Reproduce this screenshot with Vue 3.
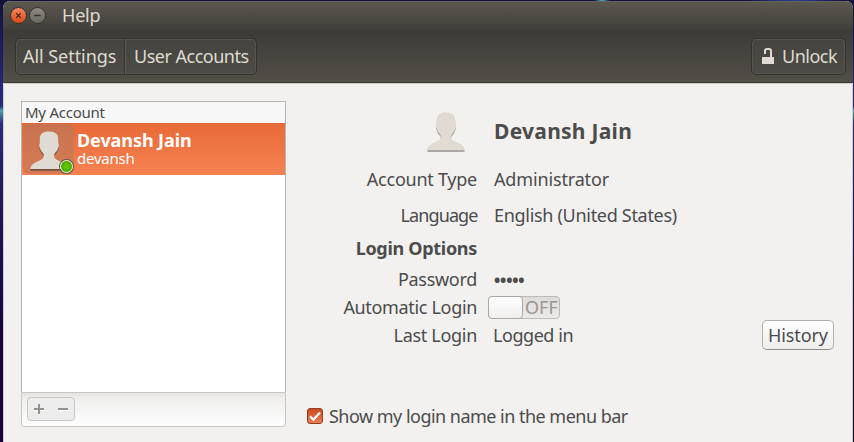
<script setup>
import { ref } from 'vue'

const automaticLogin = ref(false)
const showName = ref(true)
const silhouette =
  'M19.5 .5 C14 0 9.8 2.4 9.8 7.5 L9.6 12.5 C8.9 12.8 9 15.8 10 17.2 C10.7 19.8 12.2 20.9 13.2 22.2 C14.6 24.8 13.5 27.4 10.8 29 C6 31.2 0.6 33 0.3 38 L37.7 38 C37.4 33 32 31.2 27.2 29 C24.5 27.4 23.4 24.8 24.8 22.2 C25.8 20.9 27.3 19.8 28 17.2 C29 15.8 29.1 12.8 28.4 12.5 L28.2 7.5 C28.2 3.2 25.5 .7 19.5 .5 Z'
</script>

<template>
  <div class="desktop">
    <div class="window">
      <header class="titlebar">
        <button class="orb close" aria-label="Close">
          <svg viewBox="0 0 16 16"><path d="M5.5 5.5l5 5m0-5l-5 5" /></svg>
        </button>
        <button class="orb minimize" aria-label="Minimize">
          <svg viewBox="0 0 16 16"><path d="M4.5 8h7" /></svg>
        </button>
        <h1><span class="t-help">Help</span></h1>
      </header>

      <nav class="toolbar">
        <div class="group">
          <button class="seg all"><span class="t-all">All Settings</span></button>
          <button class="seg users"><span class="t-users">User Accounts</span></button>
        </div>
        <button class="unlock">
          <svg class="lock" viewBox="0 0 12 17">
            <path d="M0 9h12v7H0z" fill="#dfdbd2" />
            <path d="M3 6V3Q3 1 5 1H7Q9 1 9 3V9" fill="none" stroke="#dfdbd2" stroke-width="2" />
          </svg>
          <span class="t-unlock">Unlock</span>
        </button>
      </nav>

      <main class="content">
        <aside class="accounts">
          <div class="list">
            <div class="heading"><span class="t-my">My Account</span></div>
            <div class="account">
              <div class="avatar">
                <svg class="person" viewBox="0 0 38 41">
                  <path :d="silhouette" transform="translate(0 1.8)" fill="#5b4038" opacity=".75" />
                  <path :d="silhouette" fill="#dfdbd2" />
                </svg>
                <i class="online"></i>
              </div>
              <div class="names">
                <strong class="t-name">Devansh Jain</strong>
                <small class="t-login">devansh</small>
              </div>
            </div>
          </div>
          <footer class="listbar">
            <div class="edit">
              <svg viewBox="0 0 48 24">
                <path d="M7 13h10M12 8v10M31 13h10" stroke="#fff" stroke-width="2" />
                <path d="M7 12h10M12 7v10M31 12h10" stroke="#96938e" stroke-width="2" />
              </svg>
            </div>
          </footer>
        </aside>

        <section class="details">
          <div class="form">
            <div class="label photo">
              <svg class="person" viewBox="0 0 38 41">
                <path :d="silhouette" transform="translate(0 2)" fill="#aaa7a9" />
                <path :d="silhouette" fill="#dfdbd2" />
              </svg>
            </div>
            <div class="value big"><span class="t-big">Devansh Jain</span></div>
            <div class="label"><span class="t-type">Account Type</span></div>
            <div class="value"><span class="t-admin">Administrator</span></div>
            <div class="label"><span class="t-lang">Language</span></div>
            <div class="value"><span class="t-english">English (United States)</span></div>
            <div class="label bold"><span class="t-options">Login Options</span></div>
            <div></div>
            <div class="label"><span class="t-pass">Password</span></div>
            <div class="value"><span class="t-dots">•••••</span></div>
            <div class="label"><span class="t-auto">Automatic Login</span></div>
            <div class="value">
              <button class="switch" :aria-pressed="automaticLogin" @click="automaticLogin = !automaticLogin">
                <i class="knob"></i><span class="t-off">OFF</span>
              </button>
            </div>
            <div class="label"><span class="t-last">Last Login</span></div>
            <div class="value last">
              <span class="t-logged">Logged in</span>
              <button class="history"><span class="t-history">History</span></button>
            </div>
          </div>
          <div class="show" @click="showName = !showName">
            <span class="check">
              <svg v-if="showName" viewBox="0 0 16 16"><path d="M3 8.2l3.4 3.5L13 4.5" /></svg>
            </span>
            <span class="t-show">Show my login name in the menu bar</span>
          </div>
        </section>
      </main>
    </div>
  </div>
</template>

<style>
body { margin: 0; overflow: hidden; }
</style>

<style scoped>
* { box-sizing: border-box; }
button { padding: 0; border: 0; background: none; font: inherit; color: inherit; }
svg { display: block; }
span { white-space: nowrap; }
.desktop {
  height: 442px;
  padding: 1px 1px 0 3px;
  background:
    radial-gradient(8px 4px at 602px 0, #4fc0c4, transparent),
    radial-gradient(50px 4px at 795px 0, #2c3fa0, transparent),
    linear-gradient(#14103c, #25287a 20%, #252b79 24%, #48a0ae 25%, #292b7d 28%, #20195b 45%, #180240 75%, #1c023f);
  font: 18px/24px "Noto Sans", "Open Sans", sans-serif;
  color: #4c4c4c;
}
.window { display: flex; flex-direction: column; height: 441px; border-radius: 7px 7px 0 0; overflow: hidden; background: #f2f1f0; }
.titlebar { display: flex; align-items: center; height: 29px; padding-left: 7px; background: linear-gradient(#5b584e, #403f3a); border-top: 1px solid #65635b; color: #dfdbd2; }
.orb { width: 17px; height: 17px; margin: 0 2px 1px 0; border: 1px solid #34332e; border-radius: 50%; }
.orb svg { width: 15px; height: 15px; fill: none; stroke: #3c2b24; stroke-width: 1.4; }
.close { background: linear-gradient(#f58661, #dd4814); }
.minimize { background: linear-gradient(#8e8c84, #696861); }
h1 { margin: 0 0 2px 14px; font: inherit; }
.toolbar { display: flex; justify-content: space-between; align-items: flex-start; height: 53px; padding: 8px 7px 0 12px; background: linear-gradient(#3c3b37, #524f47); border-bottom: 1px solid #3c3b37; color: #dfdbd2; text-shadow: 0 -1px #2d2c29; }
.group, .unlock { display: flex; height: 37px; border: 1px solid #34332f; border-radius: 5px; background: linear-gradient(#454440, #4d4b45); box-shadow: inset 0 0 0 1px #57554e; }
.seg { display: flex; align-items: center; padding: 0 0 2px 7px; }
.all { width: 109px; border-right: 1px solid #34332f; }
.users { width: 131px; padding-left: 9px; box-shadow: inset 1px 0 #5d5b54; }
.unlock { width: 95px; align-items: center; padding: 0 0 2px 10px; }
.lock { width: 12px; height: 17px; margin: 2px 8px 0 0; }
.content { display: flex; flex: 1; padding: 17px 17px 0 17px; border: solid #d0cecb; border-width: 1px 1px 0; border-radius: 2px 2px 0 0; }
.accounts { width: 265px; flex: none; }
.list { height: 291px; border: 1px solid #b7b5b3; border-width: 1px 1px 0; background: #fff; }
.heading { height: 21px; padding-left: 3px; background: #f7f7f7; font-size: 15px; line-height: 21px; }
.account { display: flex; height: 52px; background: linear-gradient(#e86b39, #f68252); border-top: 1px solid #e36534; color: #fff; }
.avatar { position: relative; width: 51px; height: 50px; margin-left: 1px; padding: 7px 6px 0 7px; border-radius: 5px; background: linear-gradient(#c87350, #d67b54); }
.avatar .person { width: 38px; height: 41px; }
.online { position: absolute; right: 1px; bottom: 1px; width: 13px; height: 13px; border: 1px solid #e9eede; border-radius: 50%; background: radial-gradient(#64ce00, #419d00); box-shadow: 0 0 0 1px #5b5b45; }
.names { padding: 7px 0 0 3px; }
.names strong, .names small { display: block; height: 19px; line-height: 19px; }
.names small { font-size: 15px; line-height: 17px; }
.listbar { height: 35px; padding: 4px 5px; border: 1px solid #c9c6c3; border-radius: 0 0 3px 3px; background: linear-gradient(#e4e3e1, #f0efee 6px, #fdfdfd); }
.edit { width: 48px; height: 24px; border: 1px solid #c6c6c6; border-radius: 4px; background: #ededed; }
.edit svg { width: 48px; height: 24px; margin: -1px; }
.details { flex: 1; padding-left: 21px; }
.form { display: grid; grid-template: 60px 36px 35px 32px 30px 26px 30px / 170px 1fr; column-gap: 17px; align-items: center; }
.label { display: flex; justify-content: flex-end; }
.value { display: flex; align-items: center; }
.bold { font-weight: 700; }
.big { font-size: 21px; font-weight: 700; }
.photo .person { width: 38px; height: 41px; margin: 2px 12px 0 0; }
.switch { display: flex; align-items: center; width: 72px; height: 23px; margin-left: -6px; border: 1px solid #bcbab8; border-radius: 4px; background: linear-gradient(#dedcda, #ebeae8); color: #99958f; }
.knob { width: 35px; height: 23px; margin: -1px 2px -1px -1px; border: 1px solid #aaa8a6; border-radius: 4px; background: linear-gradient(#fff, #f0efee); }
.last { justify-content: space-between; margin: 0 1px 0 -1px; }
.history { display: flex; justify-content: center; align-items: center; width: 72px; height: 30px; border: 1px solid #b2afac; border-bottom-color: #918f8c; border-radius: 5px; background: linear-gradient(#fff, #eeedec); }
.show { display: flex; align-items: center; gap: 6px; margin-top: 54px; }
.check { width: 16px; height: 16px; border: 1px solid #943d20; border-radius: 3px; background: linear-gradient(#cb4a1e, #e77f57); }
.check svg { width: 16px; height: 16px; margin: -1px; fill: none; stroke: #fff; stroke-width: 2.2; }

/* optical tracking per text */
.t-help { letter-spacing: -.2px; }
.t-all { letter-spacing: -.05px; }
.t-users { letter-spacing: -.5px; }
.t-unlock { letter-spacing: -.5px; }
.t-my { letter-spacing: -.25px; }
.t-name { letter-spacing: -.08px; }
.t-login { letter-spacing: -.25px; }
.t-big { letter-spacing: .27px; }
.t-type { letter-spacing: -.25px; }
.t-admin { letter-spacing: -.15px; }
.t-lang { letter-spacing: -.9px; margin-right: -.5px; }
.t-english { letter-spacing: -.3px; }
.t-options { letter-spacing: -.3px; }
.t-pass { letter-spacing: -.3px; }
.t-dots { font-size: 22px; letter-spacing: -2.2px; margin-left: -1px; }
.t-auto { letter-spacing: -.33px; }
.t-last { letter-spacing: -.3px; }
.t-logged { letter-spacing: -.45px; }
.t-history { letter-spacing: -.1px; }
.t-show { letter-spacing: -.52px; }
</style>
